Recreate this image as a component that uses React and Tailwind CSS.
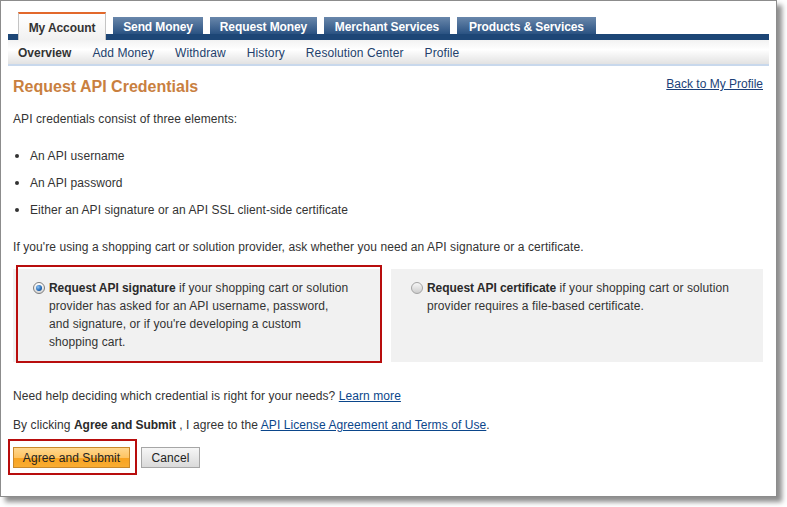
const tabs = [
  { label: 'Send Money', w: 'w-[90px]' },
  { label: 'Request Money', w: 'w-[107px]' },
  { label: 'Merchant Services', w: 'w-[126px]' },
  { label: 'Products & Services', w: 'w-[139px]' },
];

const subnav = ['Add Money', 'Withdraw', 'History', 'Resolution Center', 'Profile'];

const bullets = [
  'An API username',
  'An API password',
  'Either an API signature or an API SSL client-side certificate',
];

const Radio = ({ checked }) =>
  checked ? (
    <span className="mt-[3px] w-[12px] h-[12px] shrink-0 rounded-full border border-[#7d7d7d] bg-gradient-to-b from-[#ffffff] to-[#d6d6d6] flex items-center justify-center">
      <span className="w-[6px] h-[6px] rounded-full bg-[radial-gradient(circle_at_35%_35%,#8fc4f5,#2066b3_60%,#163f70)]" />
    </span>
  ) : (
    <span className="mt-[3px] w-[12px] h-[12px] shrink-0 rounded-full border border-[#a3a3a3] bg-gradient-to-b from-[#f7f7f7] to-[#cdcdcd]" />
  );

const App = () => {
  return (
    <div className="w-[787px] h-[507px] bg-white font-['Liberation_Sans',Arial,sans-serif] text-[12px] text-[#333] tracking-[0.08px]">
      <div className="w-[777px] h-[497px] border border-[#8c8c8c] bg-white shadow-[5px_5px_5px_rgba(0,0,0,0.45)] flex flex-col">

        {/* Header */}
        <div className="mx-[7px] mt-[11px]">
          <div className="h-[28px] pl-[10px] flex items-end gap-[7px] bg-[linear-gradient(to_bottom,transparent_22px,#1d4676_22px)] tracking-[-0.1px]">
            <div className="w-[88px] h-[28px] border-t-2 border-[#e2682b] border-x border-x-[#c4c4c4] bg-gradient-to-b from-[#ffffff] to-[#f1f1f1] text-center font-bold text-[#333] leading-[14px] pt-[7px]">
              My Account
            </div>
            {tabs.map((t) => (
              <div
                key={t.label}
                className={`${t.w} h-[23px] bg-[linear-gradient(to_bottom,#6987ab,#2a5282_17px,#1d4676_17px)] text-center font-bold text-white leading-[14px] pt-[3px]`}
              >
                {t.label}
              </div>
            ))}
          </div>
          <div className="h-[26px] pt-[1px] border-b-2 border-[#c8d8ec] bg-[linear-gradient(to_bottom,#f2f2f2,#ffffff_40%,#e2e2e2)] pl-[10px] flex items-center gap-[21px] leading-[14px] tracking-[0.1px]">
            <span className="font-bold text-[#333] tracking-normal">Overview</span>
            {subnav.map((s) => (
              <span key={s} className="text-[#233f6c]">{s}</span>
            ))}
          </div>
        </div>

        {/* Content */}
        <div className="pl-[12px] pr-[13px] pt-[11px] flex flex-col">
          <div className="flex justify-between items-start">
            <h1 className="text-[16px] leading-[20px] font-bold text-[#c9803f] tracking-normal">Request API Credentials</h1>
            <a className="leading-[14px] underline text-[#1b3f78] tracking-normal">Back to My Profile</a>
          </div>

          <p className="mt-[15px] leading-[14px]">API credentials consist of three elements:</p>

          <div className="mt-[23px] flex flex-col gap-[13px]">
            {bullets.map((b) => (
              <div key={b} className="flex items-center leading-[14px]">
                <span className="ml-[2px] w-[4px] h-[4px] rounded-full bg-[#333]" />
                <span className="ml-[11px]">{b}</span>
              </div>
            ))}
          </div>

          <p className="mt-[23px] leading-[14px]">
            If you're using a shopping cart or solution provider, ask whether you need an API signature or a certificate.
          </p>

          <div className="mt-[15px] flex gap-[11px]">
            <div className="relative w-[367px] h-[93px] bg-[#f1f1f1] pl-[20px] pt-[10px] flex gap-[4px] leading-[18px]">
              <Radio checked />
              <p>
                <b className="text-[#2a2a2a] tracking-[-0.05px]">Request API signature</b> if your shopping cart or solution
                <br />provider has asked for an API username, password,
                <br />and signature, or if you're developing a custom
                <br />shopping cart.
              </p>
              <div className="absolute top-[-4px] left-[3px] right-[-2px] bottom-[-1px] border-2 border-[#b80d0d] pointer-events-none" />
            </div>
            <div className="w-[372px] h-[93px] bg-[#f1f1f1] pl-[20px] pt-[10px] flex gap-[4px] leading-[18px]">
              <Radio />
              <p>
                <b className="text-[#2a2a2a] tracking-[-0.05px]">Request API certificate</b> if your shopping cart or solution
                <br />provider requires a file-based certificate.
              </p>
            </div>
          </div>

          <p className="mt-[27px] leading-[14px]">
            Need help deciding which credential is right for your needs?{' '}
            <a className="underline text-[#0b468b]">Learn more</a>
          </p>

          <p className="mt-[15px] leading-[14px]">
            By clicking <b className="text-[#2a2a2a] tracking-[-0.05px]">Agree and Submit</b> , I agree to the{' '}
            <a className="underline text-[#0b468b]">API License Agreement and Terms of Use</a>.
          </p>

          <div className="mt-[15px] flex gap-[11px]">
            <div className="relative">
              <button className="w-[117px] h-[21px] border border-[#c9882a] bg-[linear-gradient(to_bottom,#ffd78e,#fec463_50%,#f8a21f_50%,#f9ad32)] text-[#222] leading-[14px]">
                Agree and Submit
              </button>
              <div className="absolute top-[-8px] left-[-5px] right-[-7px] bottom-[-7px] border-2 border-[#b80d0d] pointer-events-none" />
            </div>
            <button className="w-[59px] h-[21px] border border-[#a6a6a6] bg-gradient-to-b from-[#f6f6f6] to-[#dadada] text-[#222] leading-[14px]">
              Cancel
            </button>
          </div>
        </div>
      </div>
    </div>
  );
};

export default App;
